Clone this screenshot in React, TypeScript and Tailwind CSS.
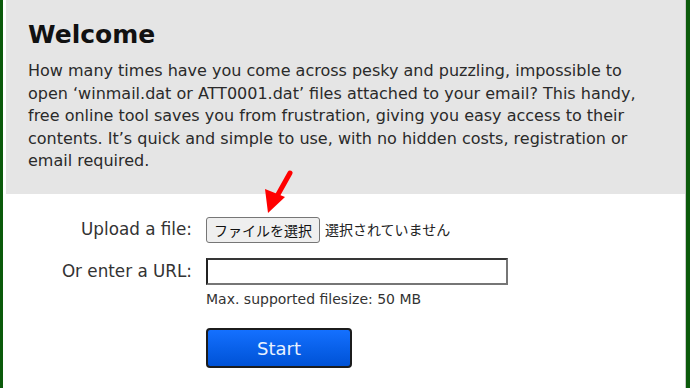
export default function App() {
  return (
    <div
      className="relative h-[388px] w-[690px] overflow-hidden bg-white border-l-[3px] border-r-[4px] border-[#0b5a0b] pl-[3px] pr-0"
      style={{ fontFamily: '"DejaVu Sans", Verdana, sans-serif' }}
    >
      <div className="flex h-full flex-col border-r border-[#c8c8c8]">
        {/* Welcome panel */}
        <section className="bg-[#e5e5e5] px-[22px] pt-[19px] pb-[21px] text-[#222]">
          <h1 className="text-[25px] leading-[31px] font-bold text-[#111]">Welcome</h1>
          <p className="mt-[10px] text-[16px] leading-[22.6px] text-[#2a2a2a]">
            How many times have you come across pesky and puzzling, impossible to open ‘winmail.dat or ATT0001.dat’ files attached to your email? This handy, free online tool saves you from frustration, giving you easy access to their contents. It’s quick and simple to use, with no hidden costs, registration or email required.
          </p>
        </section>

        {/* Upload form */}
        <section className="flex flex-col pt-[23px] text-[16px] text-[#333]">
          <div className="flex items-center gap-[14px]">
            <label className="w-[186px] text-right text-[16.8px]">Upload a file:</label>
            <div className="flex items-center gap-[5px]" style={{ fontFamily: '"Noto Sans CJK JP", sans-serif' }}>
              <button className="h-[26px] rounded-[3px] border border-[#767676] bg-[#efefef] px-[7px] text-[14px] leading-none text-[#111]">
                ファイルを選択
              </button>
              <span className="text-[14px] text-[#222]">選択されていません</span>
            </div>
          </div>
          <div className="mt-[15px] flex items-center gap-[14px]">
            <label className="w-[186px] text-right text-[16.8px]">Or enter a URL:</label>
            <input className="h-[27px] w-[302px] border-2 border-[#767676] border-t-[#8a8a8a] bg-white" style={{ borderStyle: "inset" }} />
          </div>
          <div className="ml-[200px] mt-[5px] text-[14px] leading-[18px] text-[#333]">Max. supported filesize: 50 MB</div>
          <div className="ml-[200px] mt-[20px]">
            <button className="h-[40px] w-[146px] rounded-[4px] border-2 border-[#1c1c1c] bg-gradient-to-b from-[#1470ff] to-[#0052d6] pt-[2px] text-[18px] text-[#e8f1ff]">
              Start
            </button>
          </div>
        </section>
      </div>

      {/* red arrow pointing at file button */}
      <svg className="absolute left-[257px] top-[168px]" width="40" height="48" viewBox="0 0 40 48">
        <line x1="30" y1="5" x2="16" y2="30" stroke="#ff0000" strokeWidth="5" strokeLinecap="round" />
        <polygon points="5,21 25,29 8,45" fill="#ff0000" />
      </svg>
    </div>
  );
}
